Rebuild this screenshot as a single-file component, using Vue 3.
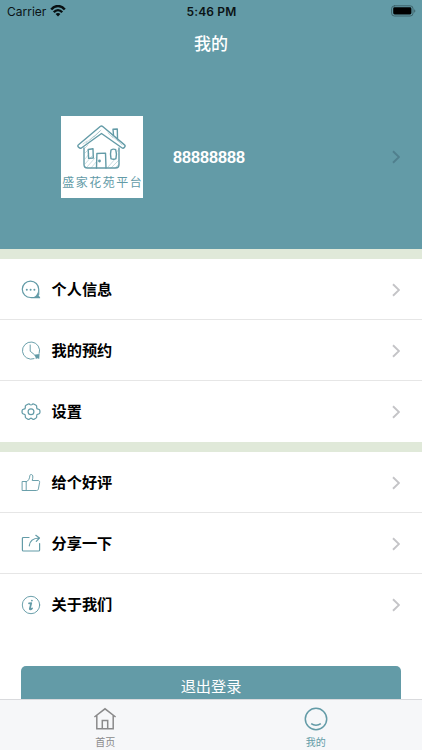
<script setup>
const groups = [
  [
    { icon: 'chat', label: '个人信息' },
    { icon: 'clock', label: '我的预约' },
    { icon: 'gear', label: '设置' },
  ],
  [
    { icon: 'thumb', label: '给个好评' },
    { icon: 'share', label: '分享一下' },
    { icon: 'info', label: '关于我们' },
  ],
]
</script>

<template>
  <div class="screen">
    <header class="head">
      <div class="status">
        <div class="carrier">
          <span>Carrier</span>
          <svg class="wifi" viewBox="0 0 16 12" width="16" height="12">
            <path d="M1.200 4.600C5-.2 11-.2 14.800 4.600" />
            <path d="M3.800 7.200c2.400-2.800 6-2.800 8.400 0" />
            <path class="dot" d="M5.600 9.100c1.400-1.400 3.400-1.400 4.800 0L8 11.600z" />
          </svg>
        </div>
        <span class="time">5:46 PM</span>
        <div class="power">
          <svg viewBox="0 0 25 12" width="25" height="12">
            <rect class="shell" x=".6" y=".8" width="21.400" height="10.200" rx="2.800" />
            <rect x="2.200" y="2.300" width="18.200" height="7.200" rx="1.400" />
            <path class="tip" d="M23.200 4.200c1.500.8 1.500 2.800 0 3.600z" />
          </svg>
        </div>
      </div>
      <h1>我的</h1>
      <div class="profile">
        <div class="logo">
          <svg viewBox="0 0 50 45" width="50" height="45">
            <g class="hatch">
              <path d="M6 19l4-3M9 18l8-7M13 15l10-9M17 12l7-7M31 8l5 5M35 11l6 5M40 15l5 5M8 23l3-3M8 28l3-3M8 34l4-5M8 39l7-8M10 42l8-9M14 43l6-7M31 42l8-9M34 43l8-8M38 43l4-4M39 28l3-4" />
            </g>
            <path d="M7 23v16.500c0 2.500 1 3.500 3.500 3.500h28c2.500 0 3.500-1 3.500-3.500V23" />
            <path d="M23.500 1.300L1.500 19.800c-1 .8-.8 1.700.1 2.500.9.900 1.800 1.500 2.800.7L24.500 8.500 45.200 23c1 .6 1.600.1 2.300-.7.800-.9.900-1.700 0-2.400L26 1.700c-1-.8-1.700-1-2.500-.4z" />
            <path d="M36.500 10l-.5-5.800 4.300-.2.200 9.500" />
            <path d="M19.500 43l.4-14.500 8.600-.4.500 14.900" />
            <path d="M11.200 24.500l4.800-.8.300 9.300-4.700.4zM34 25c1.500-1 3.500-1 4.700-.3.900 2.500 1 6 .2 9-1.500.8-3.400.7-4.900 0-.7-2.700-.7-6 0-8.700z" />
            <circle cx="22.500" cy="36" r=".7" />
          </svg>
          <span>盛家花苑平台</span>
        </div>
        <strong>88888888</strong>
        <svg class="chev dim" viewBox="0 0 8 14" width="8" height="14"><path d="M1 1.200l6 5.800-6 5.800" /></svg>
      </div>
    </header>

    <section v-for="(rows, g) in groups" :key="g" class="group">
      <div v-for="row in rows" :key="row.label" class="row">
        <svg class="ico" viewBox="0 0 20 20" width="20" height="20">
          <g v-if="row.icon === 'chat'">
            <path d="M17.700 14.500V9.300A8.200 8.200 0 1 0 9.500 17.500h8.800" />
            <path class="fill" d="M17.100 11c0 3 .2 4.500 2 6.200v1H9.800c-1.200-.4 2.700-.7 4.100-1.700 1.700-1.300 2.800-3.200 3.200-5.500z" />
            <circle class="fill" cx="5.800" cy="9.700" r="1" /><circle class="fill" cx="9.600" cy="9.700" r="1" /><circle class="fill" cx="13.400" cy="9.700" r="1" />
          </g>
          <g v-else-if="row.icon === 'clock'" class="thin">
            <path d="M13 17.700A8.600 8.600 0 1 1 18.200 12.400" />
            <path d="M9.200 4v6.200l4 3.300" />
            <path class="fill" d="M13 13.700l5.600-.7-.4 5-1.800-.8-1.600.7-.3-1.900z" />
          </g>
          <g v-else-if="row.icon === 'gear'">
            <path transform="translate(-.5 0) scale(1.050 1)" d="M5.200 3.300L7 2.200c1-.5 1.700-.1 2.100.5.400.4 1.400.4 1.800 0 .5-.7 1.200-1 2.100-.5l1.800 1.100c.9.600.7 1.500.6 2.200-.1 1 .5 1.600 1.400 1.700.9.100 1.700.600 1.700 1.600v1.800c0 .9-.8 1.500-1.700 1.600-.9.100-1.500.7-1.400 1.700.1.800.3 1.600-.6 2.200L13 17.200c-1 .5-1.600.1-2.100-.5-.4-.4-1.400-.4-1.800 0-.5.600-1.100 1-2.100.5l-1.800-1.100c-.9-.6-.7-1.400-.6-2.200.1-1-.5-1.600-1.400-1.700-.9-.1-1.700-.7-1.700-1.600V8.800c0-1 .8-1.500 1.700-1.600.9-.1 1.500-.7 1.400-1.700-.1-.7-.3-1.600.6-2.200z" />
            <circle cx="10" cy="9.700" r="2.900" />
          </g>
          <g v-else-if="row.icon === 'thumb'" class="thin">
            <path d="M1.500 8.500h3.700v9H1.500zM5.200 8.800c2.200-.8 3.400-2.800 3.700-6.300.1-1.400 2.600-1.400 2.900.5.200 1.500-.1 3-.6 4.500H17c1.200 0 1.800.8 1.600 1.900l-1.200 6.500c-.2 1.100-.9 1.600-2 1.600H5.200" />
          </g>
          <g v-else-if="row.icon === 'share'">
            <path d="M8 3.500H2.500c-.7 0-1.100.4-1.100 1.100v11.300c0 .7.400 1.100 1.100 1.100h15c.7 0 1.100-.4 1.100-1.100V9.500" />
            <path d="M8.300 11.800c.4-4.300 3.600-7.600 9.700-7.800M14.800 1.300L18.500 4l-3.200 3.400" />
          </g>
          <g v-else class="thin">
            <circle cx="10" cy="10" r="8.700" />
            <path class="thick" d="M8 8.300l2.300-.3-1.500 5.700c-.2 1 .9.900 2.300-.4" />
            <circle class="fill" cx="10.900" cy="5.600" r=".9" />
          </g>
        </svg>
        <span>{{ row.label }}</span>
        <svg class="chev" viewBox="0 0 8 14" width="8" height="14"><path d="M1 1.200l6 5.800-6 5.800" /></svg>
      </div>
    </section>

    <main class="foot"><button>退出登录</button></main>

    <nav class="tabs">
      <div class="tab">
        <svg viewBox="0 0 24 24" width="24" height="24">
          <path d="M1.400 10L12 1.800 22.600 10M3.800 8.500v13.300h16.400V8.500M9.300 21.500v-8h5.400v8" />
        </svg>
        <span>首页</span>
      </div>
      <div class="tab on">
        <svg viewBox="0 0 24 24" width="24" height="24">
          <circle cx="12" cy="12" r="10.700" />
          <path d="M7.200 16.600c2.700 2.200 6.900 2.200 9.600 0" />
        </svg>
        <span>我的</span>
      </div>
    </nav>
  </div>
</template>

<style>
body { margin: 0; overflow: hidden; }
</style>

<style scoped>
.screen {
  display: flex;
  flex-direction: column;
  width: 422px;
  height: 750px;
  overflow: hidden;
  background: #fff;
  font-family: Inter, "Noto Sans CJK SC", sans-serif;
}
svg { display: block; flex: none; fill: none; stroke-linecap: round; stroke-linejoin: round; }
.head { height: 249px; flex: none; background: #639ba7; }
.status {
  display: grid;
  grid-template-columns: 1fr auto 1fr;
  align-items: center;
  height: 22px;
  padding: 0 6px 0 7px;
  font-size: 12px;
  color: #0b1315;
}
.carrier { display: flex; align-items: center; gap: 4px; }
.wifi { stroke: #081012; stroke-width: 2.400; stroke-linecap: butt; }
.wifi .dot { fill: #081012; stroke: none; }
.time { font-weight: 600; letter-spacing: .15px; }
.power { display: flex; justify-content: flex-end; }
.power rect { fill: #000; }
.power .shell { fill: none; stroke: #3e636b; stroke-width: 1; }
.power .tip { fill: #3e636b; }
h1 {
  height: 42px;
  margin: 0;
  padding-top: 1px;
  box-sizing: border-box;
  line-height: 42px;
  text-align: center;
  font-size: 17px;
  font-weight: 500;
  color: #fff;
}
.profile { display: flex; align-items: center; height: 82px; margin-top: 52px; padding: 0 22px 0 61px; }
.logo {
  display: flex;
  flex-direction: column;
  align-items: center;
  box-sizing: border-box;
  width: 82px;
  height: 82px;
  padding-top: 9px;
  background: #fff;
}
.logo svg { stroke: #639ba7; stroke-width: 1.400; }
.logo .hatch { stroke-width: .5; opacity: .7; }
.logo span { margin-top: 5px; font-size: 12px; line-height: 16px; letter-spacing: 1.500px; margin-right: -1.500px; font-weight: 400; color: #639ba7; white-space: nowrap; }
.profile strong { flex: 1; margin-left: 30px; font: 700 16.200px "Liberation Sans", sans-serif; color: #fff; }
.chev { stroke: #c4c4c7; stroke-width: 1.900; stroke-linecap: butt; stroke-linejoin: miter; }
.chev.dim { stroke: #507f8d; }
.group { flex: none; border-top: 10px solid #e0e9d9; }
.row {
  display: flex;
  align-items: center;
  box-sizing: border-box;
  height: 61px;
  padding: 1px 22px 0 21px;
  border-bottom: 1px solid #e6e6e6;
}
.row:last-child { border-bottom-color: transparent; }
.row span { flex: 1; margin-left: 10.500px; padding-top: 1px; font-size: 15.200px; line-height: 22px; font-weight: 600; color: #000; }
.ico { stroke: #639ba7; stroke-width: 1.200; }
.ico .thin { stroke-width: .95; }
.ico .thick { stroke-width: 1.700; }
.ico .fill { fill: #639ba7; stroke: none; }
.foot { flex: none; height: 33px; margin-top: 31px; padding: 0 21px; overflow: hidden; }
button {
  display: block;
  width: 100%;
  height: 42px;
  padding: 0;
  border: 0;
  border-radius: 5px;
  background: #639ba7;
  color: #fff;
  font: 400 15.200px/42px Inter, "Noto Sans CJK SC", sans-serif;
}
.tabs {
  display: grid;
  grid-template-columns: 1fr 1fr;
  box-sizing: border-box;
  flex: 1;
  padding-right: 1px;
  border-top: 1px solid #d9dadd;
  background: #f6f7f9;
}
.tab { display: flex; flex-direction: column; align-items: center; padding-top: 7px; color: #8a8a8b; }
.tab svg { stroke: currentColor; stroke-width: 1.500; stroke-linecap: butt; stroke-linejoin: miter; }
.tab span { margin-top: 4px; font-size: 10px; line-height: 15px; }
.tab.on { color: #639ba7; }
</style>
